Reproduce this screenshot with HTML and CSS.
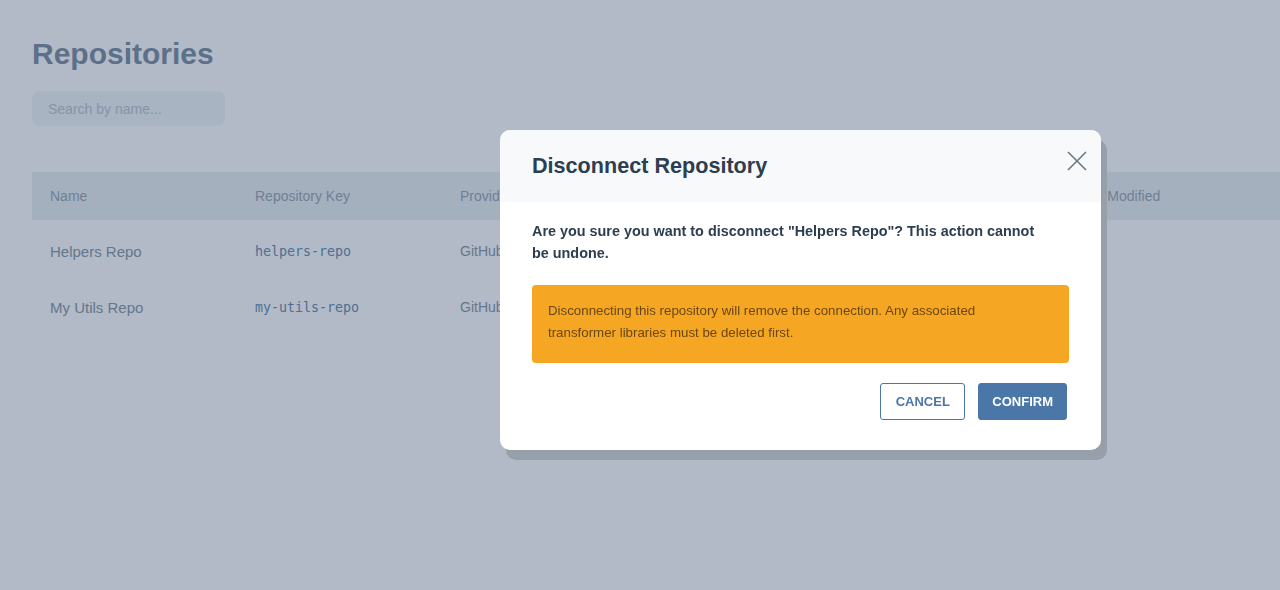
FILE: index.html
```html
<!DOCTYPE html>
<html lang="en">
<head>
    <meta charset="UTF-8">
    <meta name="viewport" content="width=device-width, initial-scale=1.0">
    <title>Repositories</title>
    <link rel="stylesheet" href="styles.css">
</head>
<body>
<div class="page">
    <h1 class="page-title">Repositories</h1>
    <input class="search" type="text" placeholder="Search by name...">

    <table class="repo-table">
        <thead>
            <tr>
                <th>Name</th>
                <th>Repository Key</th>
                <th>Provider</th>
                <th></th>
                <th></th>
                <th>Last Modified</th>
            </tr>
        </thead>
        <tbody>
            <tr>
                <td>Helpers Repo</td>
                <td class="key">helpers-repo</td>
                <td>GitHub</td>
                <td></td>
                <td></td>
                <td></td>
            </tr>
            <tr>
                <td>My Utils Repo</td>
                <td class="key">my-utils-repo</td>
                <td>GitHub</td>
                <td></td>
                <td></td>
                <td></td>
            </tr>
        </tbody>
    </table>
</div>

<div class="overlay">
    <div class="modal">
        <div class="modal-header">
            <h2>Disconnect Repository</h2>
            <button class="close-btn" aria-label="Close">
                <svg width="20" height="20" viewBox="0 0 20 20">
                    <path d="M1 1 L19 19 M19 1 L1 19" stroke="#6b7785" stroke-width="1.6" fill="none"/>
                </svg>
            </button>
        </div>
        <div class="modal-body">
            <p class="question">Are you sure you want to disconnect "Helpers Repo"? This action cannot be undone.</p>
            <div class="warning">
                Disconnecting this repository will remove the connection. Any associated transformer libraries must be deleted first.
            </div>
            <div class="actions">
                <button class="btn btn-outline">Cancel</button>
                <button class="btn btn-primary">Confirm</button>
            </div>
        </div>
    </div>
</div>
</body>
</html>
```

FILE: styles.css
```css
body {
    margin: 0;
    background: #ffffff;
    font-family: "Liberation Sans", Arial, sans-serif;
    overflow: hidden;
}

.page {
    padding: 32px 0 0 32px;
}

.page-title {
    margin: 0 0 15px;
    font-size: 30px;
    line-height: 44px;
    color: #7f92a3;
}

.search {
    display: block;
    width: 193px;
    height: 35px;
    box-sizing: border-box;
    padding: 0 16px;
    border: none;
    border-radius: 8px;
    background: #f2f6f8;
    font-family: inherit;
    font-size: 14px;
}
.search::placeholder {
    color: #bcc7cf;
}

.repo-table {
    margin-top: 46px;
    width: 1248px;
    table-layout: fixed;
    border-collapse: collapse;
    text-align: left;
}
.repo-table th {
    width: 205px;
    box-sizing: border-box;
    height: 48px;
    padding: 0 18px;
    background: #ecf1f4;
    font-weight: normal;
    font-size: 14px;
    color: #9aa9b3;
}
.repo-table th:last-child {
    width: auto;
    padding-left: 20px;
}
.repo-table td {
    height: 50px;
    padding: 6px 18px 0;
    font-size: 15px;
    color: #8b9aa7;
}
.repo-table td:nth-child(n+3) {
    font-size: 14px;
}
.repo-table td.key {
    font-family: "DejaVu Sans Mono", monospace;
    font-size: 13.3px;
    color: #6a8fb3;
}

.overlay {
    position: fixed;
    inset: 0;
    background: rgba(20, 45, 85, 0.33);
}

.modal {
    position: absolute;
    left: 500px;
    top: 130px;
    width: 601px;
    background: #ffffff;
    border-radius: 10px;
    overflow: hidden;
    box-shadow: 6px 10px 0 #96a0aa;
}

.modal-header {
    display: flex;
    align-items: center;
    justify-content: space-between;
    height: 72px;
    padding: 0 11px 0 32px;
    background: #f7f9fb;
}
.modal-header h2 {
    margin: 0;
    font-size: 21.6px;
    color: #2d3e50;
}
.close-btn {
    border: none;
    background: none;
    padding: 0;
    margin-top: -7px;
    width: 26px;
    height: 26px;
    cursor: pointer;
}

.modal-body {
    padding: 18px 32px 30px;
}
.question {
    max-width: 512px;
    margin: 0 0 21px;
    font-size: 14.4px;
    font-weight: bold;
    line-height: 22px;
    color: #2d3e50;
}

.warning {
    padding: 15px 70px 19px 16px;
    background: #f5a623;
    border-radius: 4px;
    font-size: 13.3px;
    line-height: 22px;
    color: #6b4711;
}

.actions {
    display: flex;
    justify-content: flex-end;
    gap: 13px;
    margin-top: 20px;
    padding-right: 2px;
}
.btn {
    height: 37px;
    padding: 0 13px;
    border-radius: 3px;
    font-family: inherit;
    font-size: 13px;
    font-weight: bold;
    text-transform: uppercase;
    cursor: pointer;
}
.btn-outline {
    background: #ffffff;
    border: 1px solid #4a76a8;
    color: #4a76a8;
    padding: 0 14.5px;
}
.btn-primary {
    background: #4a76a8;
    border: 1px solid #4a76a8;
    color: #ffffff;
}
```
